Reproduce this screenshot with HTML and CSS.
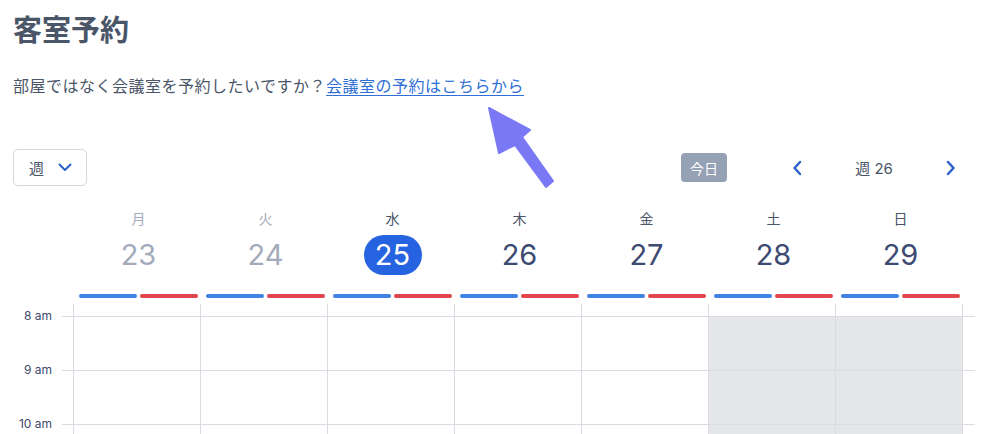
FILE: index.html
```html
<!DOCTYPE html>
<html lang="ja">
<head>
    <meta charset="UTF-8">
    <meta name="viewport" content="width=device-width, initial-scale=1.0">
    <title>客室予約</title>
    <link rel="stylesheet" href="styles.css">
</head>
<body>
    <!-- 見出し -->
    <div class="intro">
        <h1>客室予約</h1>
        <p>部屋ではなく会議室を予約したいですか？<a href="#">会議室の予約はこちらから</a></p>
    </div>

    <!-- 矢印 -->
    <svg class="pointer" width="90" height="100" viewBox="0 0 90 100">
        <polygon points="9,8 50,30 42,37 73,81 66,87 35,45 19,53" fill="#7b78f5" stroke="#7b78f5" stroke-width="2" stroke-linejoin="round"/>
    </svg>

    <!-- ツールバー -->
    <div class="toolbar">
        <button class="view-select">
            <span>週</span>
            <svg width="14" height="9" viewBox="0 0 14 9"><path d="M1.5 1.5 L7 7 L12.5 1.5" fill="none" stroke="#2a62c9" stroke-width="2" stroke-linecap="round" stroke-linejoin="round"/></svg>
        </button>
        <div class="nav">
            <button class="today">今日</button>
            <button class="arrow">
                <svg width="10" height="16" viewBox="0 0 10 16"><path d="M8 2 L2.5 8 L8 14" fill="none" stroke="#2a62c9" stroke-width="2.5" stroke-linecap="round" stroke-linejoin="round"/></svg>
            </button>
            <div class="week-label">週 26</div>
            <button class="arrow">
                <svg width="10" height="16" viewBox="0 0 10 16"><path d="M2 2 L7.5 8 L2 14" fill="none" stroke="#2a62c9" stroke-width="2.5" stroke-linecap="round" stroke-linejoin="round"/></svg>
            </button>
        </div>
    </div>

    <!-- カレンダー -->
    <div class="calendar">
        <div class="head-row">
            <div></div>
            <div class="day past"><div class="day-name">月</div><div class="day-num">23</div><div class="bars"><span class="am"></span><span class="pm"></span></div></div>
            <div class="day past"><div class="day-name">火</div><div class="day-num">24</div><div class="bars"><span class="am"></span><span class="pm"></span></div></div>
            <div class="day today-col"><div class="day-name">水</div><div class="day-num">25</div><div class="bars"><span class="am"></span><span class="pm"></span></div></div>
            <div class="day"><div class="day-name">木</div><div class="day-num">26</div><div class="bars"><span class="am"></span><span class="pm"></span></div></div>
            <div class="day"><div class="day-name">金</div><div class="day-num">27</div><div class="bars"><span class="am"></span><span class="pm"></span></div></div>
            <div class="day"><div class="day-name">土</div><div class="day-num">28</div><div class="bars"><span class="am"></span><span class="pm"></span></div></div>
            <div class="day"><div class="day-name">日</div><div class="day-num">29</div><div class="bars"><span class="am"></span><span class="pm"></span></div></div>
        </div>

        <div class="row spacer">
            <div class="label"></div><div class="tick"></div>
            <div class="cell"></div><div class="cell"></div><div class="cell"></div><div class="cell"></div>
            <div class="cell"></div><div class="cell"></div><div class="cell"></div><div class="cell end"></div>
        </div>
        <div class="row hour">
            <div class="label">8 am</div><div class="tick"></div>
            <div class="cell"></div><div class="cell"></div><div class="cell"></div><div class="cell"></div>
            <div class="cell"></div><div class="cell off"></div><div class="cell off"></div><div class="cell end"></div>
        </div>
        <div class="row hour">
            <div class="label">9 am</div><div class="tick"></div>
            <div class="cell"></div><div class="cell"></div><div class="cell"></div><div class="cell"></div>
            <div class="cell"></div><div class="cell off"></div><div class="cell off"></div><div class="cell end"></div>
        </div>
        <div class="row hour">
            <div class="label">10 am</div><div class="tick"></div>
            <div class="cell"></div><div class="cell"></div><div class="cell"></div><div class="cell"></div>
            <div class="cell"></div><div class="cell off"></div><div class="cell off"></div><div class="cell end"></div>
        </div>
    </div>
</body>
</html>
```

FILE: styles.css
```css
html, body {
    overflow: hidden;
}
body {
    font-family: Inter, "Noto Sans CJK JP", sans-serif;
    color: #4a5568;
    background-color: #ffffff;
    margin: 0;
    padding: 0;
    position: relative;
}
.intro {
    padding: 0 13px;
}
h1 {
    font-size: 29px;
    font-weight: bold;
    line-height: 34px;
    margin: 0;
    padding-top: 14px;
    color: #4a5568;
}
.intro p {
    margin: 26px 0 0;
    font-size: 16px;
    letter-spacing: 0.5px;
    line-height: 24px;
}
.intro a {
    color: #2f6fd6;
    text-decoration: underline;
    text-underline-offset: 3px;
}
.pointer {
    position: absolute;
    left: 480px;
    top: 100px;
}
.toolbar {
    display: flex;
    justify-content: space-between;
    align-items: center;
    margin: 51px 21px 0 13px;
}
button {
    font-family: inherit;
    cursor: pointer;
}
.view-select {
    display: flex;
    align-items: center;
    gap: 14px;
    width: 74px;
    height: 37px;
    padding: 0 0 0 15px;
    background: #ffffff;
    border: 1px solid #d4d8df;
    border-radius: 5px;
    font-size: 15px;
    color: #4a5568;
}
.nav {
    display: flex;
    align-items: center;
}
.today {
    width: 46px;
    height: 29px;
    margin-right: 58px;
    padding: 0;
    background-color: #95a1b5;
    color: #ffffff;
    border: none;
    border-radius: 4px;
    font-size: 14px;
}
.arrow {
    width: 24px;
    height: 30px;
    padding: 0;
    background: none;
    border: none;
    display: flex;
    align-items: center;
    justify-content: center;
}
.week-label {
    width: 130px;
    text-align: center;
    font-size: 15px;
    color: #4a5568;
}
.calendar {
    width: 975px;
}
.head-row {
    display: grid;
    grid-template-columns: 73px repeat(7, 127px);
    padding-top: 23px;
}
.day {
    display: flex;
    flex-direction: column;
    align-items: center;
    padding: 0 2px 0 6px;
}
.day-name {
    font-size: 14px;
    line-height: 20px;
    color: #4a5568;
}
.day-num {
    margin-top: 6px;
    height: 40px;
    line-height: 40px;
    font-size: 29px;
    color: #3d4a72;
    padding: 0 8px;
}
.past .day-name,
.past .day-num {
    color: #a3abbb;
}
.today-col .day-num {
    background-color: #2563e0;
    color: #ffffff;
    border-radius: 20px;
    width: 58px;
    padding: 0;
    text-align: center;
}
.bars {
    display: flex;
    gap: 3px;
    width: 100%;
    margin-top: 19px;
    margin-bottom: 6px;
}
.bars span {
    flex: 1;
    height: 4px;
    border-radius: 2px;
}
.bars .am {
    background-color: #3f83e4;
}
.bars .pm {
    background-color: #e2454a;
}
.row {
    display: grid;
    grid-template-columns: 62px 11px repeat(7, 127px) 13px;
}
.spacer {
    height: 12px;
}
.hour {
    height: 54px;
}
.cell {
    border-left: 1px solid #d9dce2;
}
.hour .cell,
.hour .tick {
    border-top: 1px solid #d9dce2;
}
.cell.off {
    background-color: #e5e6e8;
}
.label {
    font-size: 12px;
    line-height: 14px;
    text-align: right;
    padding-right: 10px;
    margin-top: -7px;
    color: #3d4a6b;
}
```
